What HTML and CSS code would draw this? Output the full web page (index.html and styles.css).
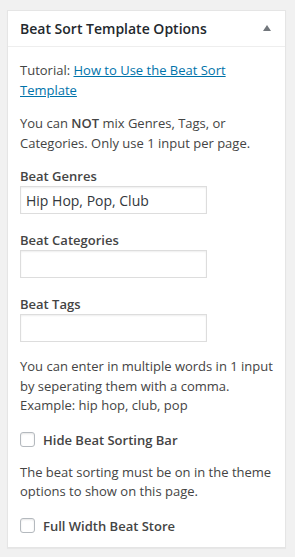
FILE: index.html
```html
<!DOCTYPE html>
<html>
<head>
    <title>Beat Sort Template Options</title>
    <link rel="stylesheet" href="styles.css">
</head>
<body>
    <div class="postbox">
        <div class="postbox-header">
            <h2>Beat Sort Template Options</h2>
            <span class="toggle-arrow"></span>
        </div>
        <div class="inside">
            <p>Tutorial: <a href="#">How to Use the Beat Sort Template</a></p>
            <p class="note">You can <strong>NOT</strong> mix Genres, Tags, or Categories. Only use 1 input per page.</p>

            <div class="field">
                <label class="field-label">Beat Genres</label>
                <input type="text" value="Hip Hop, Pop, Club">
            </div>
            <div class="field">
                <label class="field-label">Beat Categories</label>
                <input type="text">
            </div>
            <div class="field">
                <label class="field-label">Beat Tags</label>
                <input type="text">
            </div>

            <p>You can enter in multiple words in 1 input by seperating them with a comma. Example: hip hop, club, pop</p>

            <label class="check"><input type="checkbox"><span class="box"></span>Hide Beat Sorting Bar</label>

            <p>The beat sorting must be on in the theme options to show on this page.</p>

            <label class="check"><input type="checkbox"><span class="box"></span>Full Width Beat Store</label>
        </div>
    </div>
</body>
</html>
```

FILE: styles.css
```css
body {
    margin: 0;
    padding: 10px 9px 10px 7px;
    background-color: #f1f1f1;
    font-family: "Open Sans", sans-serif;
    font-size: 13px;
    color: #444;
}
.postbox {
    background: #fff;
    border: 1px solid #e5e5e5;
    box-shadow: 0 1px 1px rgba(0, 0, 0, 0.04);
}
.postbox-header {
    display: flex;
    align-items: center;
    justify-content: space-between;
    padding: 0 14px 0 12px;
    height: 35px;
    border-bottom: 1px solid #eee;
}
.postbox-header h2 {
    margin: 0;
    font-size: 14px;
    font-weight: 600;
    color: #23282d;
}
.toggle-arrow {
    width: 0;
    height: 0;
    border-left: 4px solid transparent;
    border-right: 4px solid transparent;
    border-bottom: 6px solid #72777c;
    margin-top: -1px;
}
.inside {
    padding: 14px 12px 11px;
}
.inside p {
    margin: 0 0 14px;
    line-height: 19.5px;
}
.inside p.note {
    margin-bottom: 13px;
}
a {
    color: #0073aa;
}
strong {
    font-weight: 600;
}
.field {
    margin-bottom: 16px;
}
.field:last-of-type {
    margin-bottom: 15px;
}
.field-label {
    display: block;
    font-weight: 600;
    line-height: 20px;
}
.field input {
    display: block;
    box-sizing: border-box;
    width: 187px;
    height: 28px;
    padding: 3px 5px;
    border: 1px solid #ddd;
    box-shadow: inset 0 1px 2px rgba(0, 0, 0, 0.07);
    font-family: "Open Sans", sans-serif;
    font-size: 14px;
    color: #32373c;
    margin: 0;
}
.check {
    display: flex;
    align-items: center;
    font-weight: 600;
    line-height: 20px;
    margin: 14px 0 13px;
}
.check input {
    display: none;
}
.check .box {
    box-sizing: border-box;
    width: 15px;
    height: 15px;
    border: 1px solid #b4b9be;
    border-radius: 3px;
    margin-right: 8px;
    box-shadow: inset 0 1px 2px rgba(0, 0, 0, 0.1);
}
.check:last-child {
    margin-bottom: 0;
}
```
